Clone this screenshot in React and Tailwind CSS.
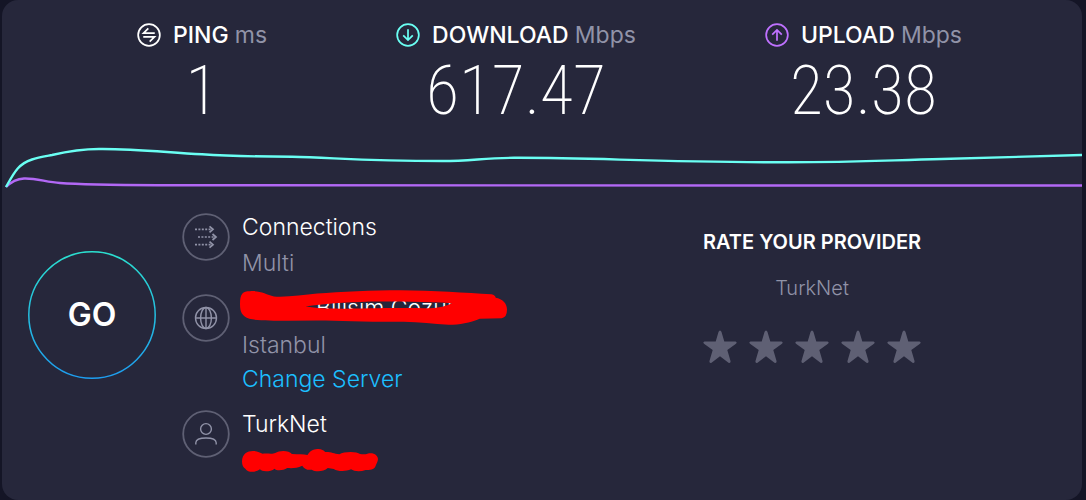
import React, { useState } from "react";

const metrics = [
    { name: "PING", unit: "ms", value: "1", icon: "ping", color: "text-white" },
    { name: "DOWNLOAD", unit: "Mbps", value: "617.47", icon: "down", color: "text-[#6afff3]" },
    { name: "UPLOAD", unit: "Mbps", value: "23.38", icon: "up", color: "text-[#bf71ff]" },
];

const metricPaths = {
    ping: "M18.5 10.6H6.8L11.8 5.6M6.5 14.4H18.2L13.2 19.4",
    down: "M12.5 6.5V17.5M7.5 12.8L12.5 17.8L17.5 12.8",
    up: "M12.5 18.5V7.5M7.5 12.2L12.5 7.2L17.5 12.2",
};

function MetricIcon({ name }) {
    return (
        <svg className="size-6" viewBox="0 0 25 25" fill="none" stroke="currentColor" strokeWidth="1.8" aria-hidden="true">
            <circle cx="12.5" cy="12.5" r="11.3" />
            <path d={metricPaths[name]} />
        </svg>
    );
}

function Metric({ metric }) {
    return (
        <div className="flex flex-col items-center">
            <div className="flex items-center gap-3">
                <span className={metric.color}>
                    <MetricIcon name={metric.icon} />
                </span>
                <h2 className="text-[23px] leading-6 font-medium text-white">
                    {metric.name} <span className="font-normal text-[#9193a8]">{metric.unit}</span>
                </h2>
            </div>
            <p className="font-['Roboto_Condensed','Roboto',sans-serif] text-[68px] leading-[88px] font-extralight text-white">
                {metric.value}
            </p>
        </div>
    );
}

function SpeedChart() {
    return (
        <svg className="block h-12 w-full" viewBox="0 0 1080 48" preserveAspectRatio="none" fill="none" strokeWidth="2.4" aria-hidden="true">
            <path
                stroke="#b268f5"
                d="M4 43C9 38 14 35 22 34.5C34 34 44 38 58 39C85 41 120 41 170 41.3C400 42 700 41.5 1080 41.5"
            />
            <path
                stroke="#6afff3"
                d="M4 43C12 29 16 20 30 15.5C36 13.5 45 12 50 11C65 7.5 80 5 97 5C130 4.6 160 8 200 10.3C230 12.3 260 12.6 290 12.8C330 13.5 360 17 440 17C470 17 480 14 512 13.8C590 13.5 650 18 780 18.3C850 18.5 880 16.5 940 15C980 14.3 1030 12 1080 11"
            />
        </svg>
    );
}

function GoButton() {
    return (
        <button type="button" className="relative size-32 shrink-0 rounded-full text-[32px] font-semibold text-white">
            <svg className="absolute inset-0 size-32" viewBox="0 0 128 128" fill="none" aria-hidden="true">
                <defs>
                    <linearGradient id="go-ring" x1="0" y1="0" x2="0" y2="1">
                        <stop offset="0" stopColor="#2be0d0" />
                        <stop offset="1" stopColor="#1d9df0" />
                    </linearGradient>
                </defs>
                <circle cx="64" cy="64" r="63.2" stroke="url(#go-ring)" strokeWidth="1.5" />
            </svg>
            GO
        </button>
    );
}

function RoundIcon({ children }) {
    return (
        <svg className="size-12 shrink-0" viewBox="0 0 48 48" fill="none" stroke="#9193a8" strokeWidth="1.4" aria-hidden="true">
            <circle cx="24" cy="24" r="22.8" stroke="#5f6074" strokeWidth="1.8" />
            {children}
        </svg>
    );
}

function InfoRow({ icon, children }) {
    return (
        <div className="flex items-start gap-3">
            <RoundIcon>{icon}</RoundIcon>
            <div className="text-[23px] leading-7 font-light text-[#9193a8]">{children}</div>
        </div>
    );
}

function Rating() {
    const [rating, setRating] = useState(0);

    return (
        <section className="flex flex-col items-center">
            <h2 className="text-xl leading-6 font-semibold text-white">RATE YOUR PROVIDER</h2>
            <p className="mt-[22px] text-xl leading-6 font-light text-[#9193a8]">TurkNet</p>
            <div className="mt-[30px] flex gap-3">
                {
                    [1, 2, 3, 4, 5].map((star) => (
                        <button
                            key={star}
                            type="button"
                            aria-label={`Rate ${star}`}
                            onClick={() => setRating(star)}
                            className={star <= rating ? "text-[#6afff3]" : "text-[#5f6074]"}
                        >
                            <svg className="h-[34px] w-[34px]" viewBox="0 0 34 34" fill="currentColor" aria-hidden="true">
                                <path d="M17 .5Q18 .5 18.5 2L21.3 11.5H32.5Q34.5 12.3 33 13.7L24.3 20L27.6 31.2Q27.6 33.5 25.5 32.7L17 26.3L8.5 32.7Q6.4 33.5 6.4 31.2L9.7 20L1 13.7Q-.5 12.3 1.5 11.5H12.7L15.5 2Q16 .5 17 .5Z" />
                            </svg>
                        </button>
                    ))
                }
            </div>
        </section>
    );
}

export default function App() {
    return (
        <div className="min-h-screen bg-[#141526] pr-1 pl-0.5 font-['Inter',sans-serif]">
            <main className="min-h-screen rounded-2xl bg-[#26273b] pt-[23px]">
                <div className="flex justify-between pr-[120px] pl-[135px]">
                    {metrics.map((metric) => <Metric key={metric.name} metric={metric} />)}
                </div>
                <div className="mt-[9px]">
                    <SpeedChart />
                </div>
                <div className="mt-[21px] flex items-start">
                    <div className="mt-[38px] ml-[26px]">
                        <GoButton />
                    </div>
                    <div className="ml-[26px] flex flex-col">
                        <InfoRow
                            icon={
                                <>
                                    <path strokeDasharray="2 1.4" strokeWidth="1.7" d="M13 16.3H30M16 24H33M13 31.7H30" />
                                    <path strokeWidth="1.7" d="M27.5 13.3L31 16.3L27.5 19.3M30.5 21L34 24L30.5 27M27.5 28.7L31 31.7L27.5 34.7" />
                                </>
                            }
                        >
                            <p className="text-white">Connections</p>
                            <p className="mt-2">Multi</p>
                        </InfoRow>
                        <div className="mt-[17px]">
                            <InfoRow
                                icon={
                                    <>
                                        <circle cx="24" cy="24" r="10.5" />
                                        <ellipse cx="24" cy="24" rx="5.4" ry="10.5" />
                                        <path d="M24 13.5V34.5M13.5 24H34.5" />
                                    </>
                                }
                            >
                                <div className="relative w-[264px] pl-[74px] whitespace-nowrap">
                                    <p className="text-white">Bilisim Cozumleri</p>
                                    <svg className="absolute -top-1 -left-0.5 h-[35px] w-[267px]" viewBox="0 0 802 104" fill="#ff0000" fillRule="evenodd" aria-hidden="true">
                                        <path d="M0 42C0 10 8 3 30 3C62 1 78 12 102 19C140 22 190 14 232 10C300 5 400 0 482 0C580 1 680 8 755 12Q768 15 768 23C788 26 802 40 802 58Q802 82 786 84L720 86C690 99 660 104 627 104C580 101 540 96 492 95C400 96 300 92 232 91L142 92C100 91 50 92 28 86C6 78 0 65 0 42ZM197 49C250 57 300 56 392 54C450 53 520 53 572 54Q610 52 637 39C560 34 460 34 392 34C310 37 250 41 197 49Z" />
                                    </svg>
                                </div>
                                <p className="mt-[9px]">Istanbul</p>
                                <a href="#servers" className="mt-1.5 block text-[#1cbfff]">Change Server</a>
                            </InfoRow>
                        </div>
                        <div className="mt-[17px]">
                            <InfoRow
                                icon={
                                    <>
                                        <circle cx="24" cy="19" r="5.4" />
                                        <path d="M13.8 34.5V32.8C14 29.5 17.5 28 24 28S34 29.5 34.2 32.8V34.5" />
                                    </>
                                }
                            >
                                <p className="text-white">TurkNet</p>
                                <svg className="mt-[11px] h-[23px] w-[136px]" viewBox="0 0 409 69" fill="#ff0000" aria-hidden="true">
                                    <path d="M0 37C1 14 16 6 33 6C48 6 54 12 62 14C80 13 92 16 100 12C112 3 142 3 150 15C170 16 185 16 197 18C206 2 220 0 230 0Q244 1 250 9C268 8 275 14 293 16C305 7 345 6 355 15Q370 17 377 14C395 9 409 18 409 31C408 38 405 43 402 50C398 64 383 62 372 63C356 69 338 68 328 61C312 68 288 68 276 60L258 57C245 69 220 69 210 62Q190 65 181 50C165 58 150 58 136 57C124 65 103 66 98 59C85 69 60 69 54 61C44 69 20 74 10 59Q0 54 0 37Z" />
                                </svg>
                            </InfoRow>
                        </div>
                    </div>
                    <div className="mt-[17px] flex grow justify-center pl-9">
                        <Rating />
                    </div>
                </div>
            </main>
        </div>
    );
}
